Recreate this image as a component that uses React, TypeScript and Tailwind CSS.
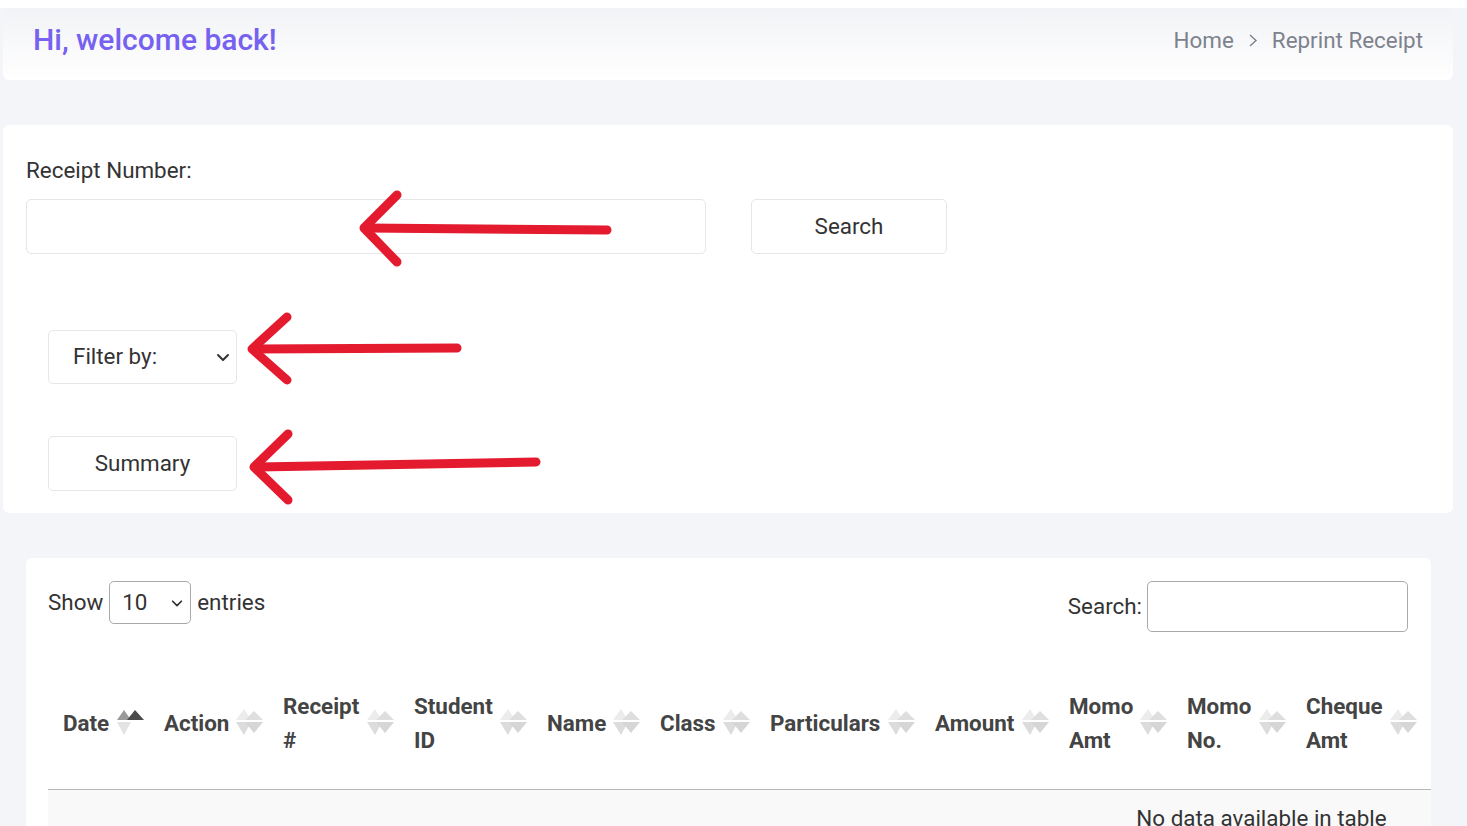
import React from "react";

function SortIcon({ active = false }: { active?: boolean }) {
  if (active) {
    return (
      <svg width="28" height="28" viewBox="0 0 28 28" className="shrink-0">
        <polygon points="0,11 7,1 14,11" fill="#9a9a9a" />
        <polygon points="10,11 18,1 27,11" fill="#4a4a4a" />
        <polygon points="0,13 7,26 14,13" fill="#e3e3e3" />
      </svg>
    );
  }
  return (
    <svg width="28" height="28" viewBox="0 0 28 28" className="shrink-0">
      <polygon points="0,11 8,0 15,11" fill="#ececec" />
      <polygon points="9,11 18,2 27,11" fill="#dedede" />
      <polygon points="0,13 8,26 15,13" fill="#dcdcdc" />
      <polygon points="9,13 18,24 27,13" fill="#d6d6d6" />
    </svg>
  );
}

function Chevron({ size = 14 }: { size?: number }) {
  return (
    <svg width={size} height={size} viewBox="0 0 16 16" fill="none">
      <path d="M3 6l5 5 5-5" stroke="#333" strokeWidth="2" strokeLinecap="round" strokeLinejoin="round" />
    </svg>
  );
}

const columns: { lines: string[]; w: number; active?: boolean }[] = [
  { lines: ["Date"], w: 101, active: true },
  { lines: ["Action"], w: 119 },
  { lines: ["Receipt", "#"], w: 131 },
  { lines: ["Student", "ID"], w: 133 },
  { lines: ["Name"], w: 113 },
  { lines: ["Class"], w: 110 },
  { lines: ["Particulars"], w: 165 },
  { lines: ["Amount"], w: 134 },
  { lines: ["Momo", "Amt"], w: 118 },
  { lines: ["Momo", "No."], w: 119 },
  { lines: ["Cheque", "Amt"], w: 131 },
];

export default function App() {
  return (
    <div className="relative min-h-[826px] w-full overflow-hidden bg-white font-['Roboto','Noto_Sans',sans-serif]">
      <div className="mt-2 min-h-[818px] bg-[#f4f5f8] pb-10">
        {/* Header card */}
        <div className="ml-[3px] flex h-[72px] w-[1450px] items-center justify-between rounded-b-md bg-gradient-to-b from-[#f2f3f6] to-white pb-[8px] pl-[30px] pr-[30px]">
          <h1 className="text-[30px] font-medium leading-none text-[#7661f0]">Hi, welcome back!</h1>
          <div className="flex items-center text-[22.4px] leading-none text-[#7d828d]">
            <span>Home</span>
            <svg width="12" height="15" viewBox="0 0 12 15" className="mx-[13px]" fill="none">
              <path d="M3 2l6 5.5-6 5.5" stroke="#7d828d" strokeWidth="1.4" />
            </svg>
            <span>Reprint Receipt</span>
          </div>
        </div>

        {/* Form card */}
        <div className="ml-[3px] mt-[45px] w-[1450px] rounded-md bg-white pb-[22px] pl-[23px] pt-[33px]">
          <div className="text-[22.4px] leading-[24px] text-[#333]">Receipt Number:</div>
          <div className="mt-[17px] flex items-center gap-[45px]">
            <div className="h-[55px] w-[680px] rounded-[5px] border border-[#e6e6e6] bg-white" />
            <button className="flex h-[55px] w-[196px] items-center justify-center rounded-[5px] border border-[#e6e6e6] bg-white text-[22.4px] text-[#333]">
              Search
            </button>
          </div>
          <div className="ml-[22px] mt-[76px] flex h-[54px] w-[189px] items-center justify-between rounded-[5px] border border-[#e6e6e6] pl-[24px] pr-[5px] text-[22.4px] text-[#333]">
            <span>Filter by:</span>
            <Chevron size={16} />
          </div>
          <button className="ml-[22px] mt-[52px] flex h-[55px] w-[189px] items-center justify-center rounded-[5px] border border-[#e6e6e6] bg-white text-[22.4px] text-[#333]">
            Summary
          </button>
        </div>

        {/* Table card */}
        <div className="ml-[26px] mt-[45px] w-[1405px] overflow-hidden rounded-t-md bg-white pl-[22px] pt-[23px]">
          <div className="flex items-start justify-between pr-[23px]">
            <div className="flex items-center text-[22.4px] text-[#333]">
              <span>Show</span>
              <div className="ml-[6px] mr-[6px] flex h-[43px] w-[82px] items-center justify-between rounded-[5px] border border-[#aaa] pl-[12px] pr-[6px]">
                <span>10</span>
                <Chevron size={14} />
              </div>
              <span>entries</span>
            </div>
            <div className="flex items-center text-[22.4px] text-[#333]">
              <span>Search:</span>
              <div className="ml-[5px] h-[51px] w-[261px] rounded-[5px] border border-[#aaa]" />
            </div>
          </div>

          <div className="w-[2427px]">
            <div className="mt-[57px] flex items-center border-b border-[#b8b8b8] pb-[32px]">
              {columns.map((c, i) => (
                <div
                  key={i}
                  className="flex shrink-0 items-center justify-between pl-[15px] pr-[4px]"
                  style={{ width: c.w }}
                >
                  <div className="text-[22.4px] font-bold leading-[34px] text-[#444]">
                    {c.lines.map((l, j) => (
                      <div key={j}>{l}</div>
                    ))}
                  </div>
                  <SortIcon active={c.active} />
                </div>
              ))}
            </div>
            <div className="h-[60px] bg-[#f9f9f9] pt-[14px] text-center text-[22.4px] leading-[28px] text-[#333]">
              No data available in table
            </div>
          </div>
        </div>
      </div>

      {/* Red annotation arrows */}
      <svg
        className="pointer-events-none absolute left-0 top-0"
        width="1467"
        height="826"
        viewBox="0 0 1467 826"
        fill="none"
      >
        <g stroke="#e41b2f" strokeWidth="9" strokeLinecap="round" strokeLinejoin="round">
          <path d="M607 230 L366 228" />
          <path d="M397 195 L364 228 L397 262" />
          <path d="M457 348 L254 349" />
          <path d="M287 317 L252 349 L287 380" />
          <path d="M536 462 L258 467" />
          <path d="M288 434 L254 467 L288 500" />
        </g>
      </svg>
    </div>
  );
}
